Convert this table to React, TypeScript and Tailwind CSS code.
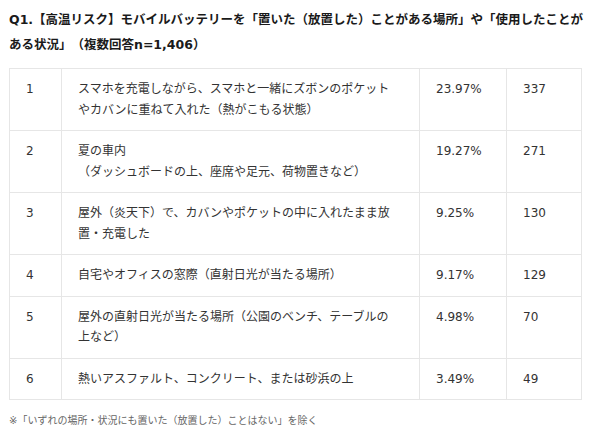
import React from "react";

const rows: { n: string; lines: string[]; pct: string; count: string }[] = [
  {
    n: "1",
    lines: ["スマホを充電しながら、スマホと一緒にズボンのポケット", "やカバンに重ねて入れた（熱がこもる状態）"],
    pct: "23.97%",
    count: "337",
  },
  {
    n: "2",
    lines: ["夏の車内", "（ダッシュボードの上、座席や足元、荷物置きなど）"],
    pct: "19.27%",
    count: "271",
  },
  {
    n: "3",
    lines: ["屋外（炎天下）で、カバンやポケットの中に入れたまま放", "置・充電した"],
    pct: "9.25%",
    count: "130",
  },
  {
    n: "4",
    lines: ["自宅やオフィスの窓際（直射日光が当たる場所）"],
    pct: "9.17%",
    count: "129",
  },
  {
    n: "5",
    lines: ["屋外の直射日光が当たる場所（公園のベンチ、テーブルの", "上など）"],
    pct: "4.98%",
    count: "70",
  },
  {
    n: "6",
    lines: ["熱いアスファルト、コンクリート、または砂浜の上"],
    pct: "3.49%",
    count: "49",
  },
];

export default function App() {
  return (
    <div
      className="w-[590px] h-[438px] bg-white overflow-hidden pl-[9px] pt-[7px] [text-spacing-trim:space-all]"
      style={{ fontFamily: '"DejaVu Sans", "Noto Sans CJK JP", sans-serif' }}
    >
      <h1 className="text-[12.5px] leading-[25px] font-bold text-[#1a1a1a] whitespace-nowrap">
        Q1.【高温リスク】モバイルバッテリーを「置いた（放置した）ことがある場所」や「使用したことが
        <br />
        ある状況」（複数回答n=1,406）
      </h1>
      <table className="mt-[11px] w-[572px] table-fixed border-collapse text-[12px] leading-[20.5px] text-[#333]">
        <colgroup>
          <col className="w-[52px]" />
          <col className="w-[358px]" />
          <col className="w-[87px]" />
          <col className="w-[75px]" />
        </colgroup>
        <tbody>
          {rows.map((r) => (
            <tr key={r.n}>
              <td className="border border-[#e6e6e6] px-4 py-[10px] align-top">{r.n}</td>
              <td className="border border-[#e6e6e6] px-4 py-[10px] align-top whitespace-nowrap">
                {r.lines.map((l, i) => (
                  <div key={i}>{l}</div>
                ))}
              </td>
              <td className="border border-[#e6e6e6] px-4 py-[10px] align-top">{r.pct}</td>
              <td className="border border-[#e6e6e6] px-4 py-[10px] align-top">{r.count}</td>
            </tr>
          ))}
        </tbody>
      </table>
      <p className="mt-[14px] text-[10px] leading-[14px] text-[#666] whitespace-nowrap">
        ※「いずれの場所・状況にも置いた（放置した）ことはない」を除く
      </p>
    </div>
  );
}
